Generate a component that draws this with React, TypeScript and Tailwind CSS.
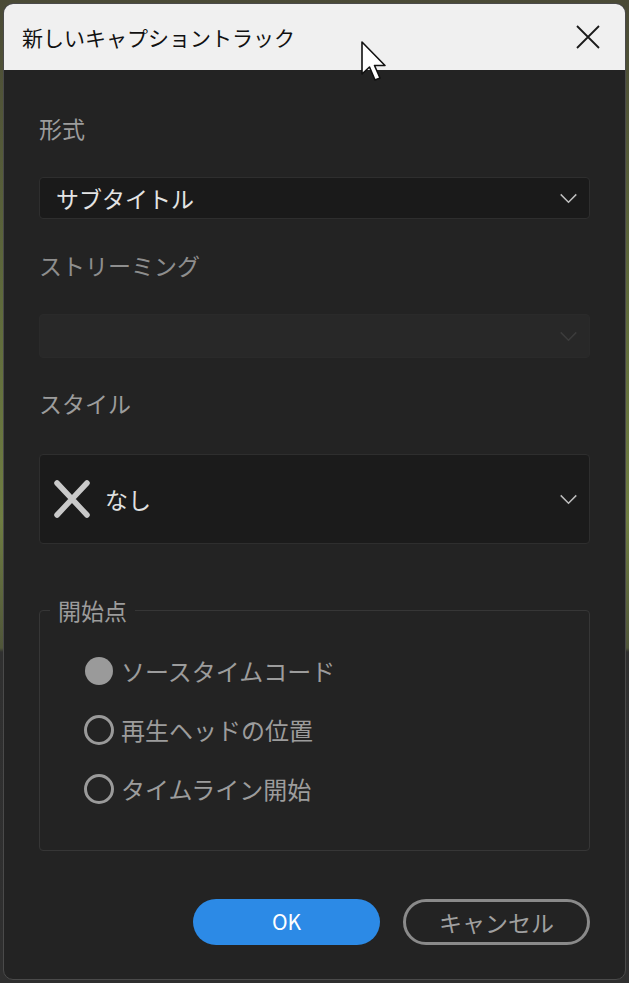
import { useState } from "react";

type StartPoint = "source" | "playhead" | "timeline";

const START_OPTIONS: { id: StartPoint; label: string }[] = [
  { id: "source", label: "ソースタイムコード" },
  { id: "playhead", label: "再生ヘッドの位置" },
  { id: "timeline", label: "タイムライン開始" },
];

function Chevron({ className }: { className?: string }) {
  return (
    <svg viewBox="0 0 20 12" className={className} fill="none" stroke="currentColor" strokeWidth="1.6">
      <path d="M1.5 1.5 L10 10 L18.5 1.5" />
    </svg>
  );
}

function Cursor() {
  return (
    <svg viewBox="0 0 28 46" className="absolute left-[360px] top-[40px] w-[28px] h-[46px] pointer-events-none">
      <path
        d="M2 2 L2 34 L9.5 27 L15 40 L20 38 L14.5 25.5 L25 25.5 Z"
        fill="#fff"
        stroke="#111"
        strokeWidth="1.6"
        strokeLinejoin="round"
      />
    </svg>
  );
}

export default function App() {
  const [start, setStart] = useState<StartPoint>("source");

  return (
    <div
      className="relative h-[983px] w-[629px] p-[3px] bg-[linear-gradient(180deg,#4a4a36_0px,#5f6a3c_300px,#6f7d42_520px,#50563a_648px,#303030_652px,#2f2f2f_983px)]"
      style={{ fontFamily: '"Noto Sans CJK JP", "Noto Sans", sans-serif' }}
    >
      <div className="flex flex-col h-full rounded-[10px] overflow-hidden bg-[#232323] border border-[#4a4a4a]">
        {/* Title bar */}
        <div className="flex items-center justify-between h-[66px] shrink-0 bg-[#f0f0f0] pl-[18px] pr-[25px]">
          <span className="text-[21px] text-[#111] leading-none">新しいキャプショントラック</span>
          <svg viewBox="0 0 24 24" className="w-[24px] h-[24px]" stroke="#1a1a1a" strokeWidth="1.8" fill="none">
            <path d="M1 1 L23 23 M23 1 L1 23" />
          </svg>
        </div>

        {/* Body */}
        <div className="flex flex-col px-[35px]">
          <div className="mt-[43px] text-[23px] leading-[30px] text-[#9c9c9c]">形式</div>
          <div className="mt-[34px] flex items-center justify-between h-[42px] rounded-[4px] bg-[#1a1a1a] border border-[#2e2e2e] pl-[16px] pr-[11px]">
            <span className="text-[23px] text-[#e4e4e4]">サブタイトル</span>
            <Chevron className="w-[19px] h-[11px] text-[#bdbdbd]" />
          </div>

          <div className="mt-[31px] text-[23px] leading-[30px] text-[#8e8e8e]">ストリーミング</div>
          <div className="mt-[34px] flex items-center justify-end h-[44px] rounded-[4px] bg-[#282828] border border-[#2a2a2a] pr-[11px]">
            <Chevron className="w-[19px] h-[11px] text-[#3c3c3c]" />
          </div>

          <div className="mt-[30px] text-[23px] leading-[30px] text-[#9c9c9c]">スタイル</div>
          <div className="mt-[36px] flex items-center justify-between h-[90px] rounded-[4px] bg-[#1b1b1b] border border-[#2e2e2e] pl-[12px] pr-[11px]">
            <div className="flex items-center gap-[13px]">
              <svg viewBox="0 0 40 40" className="w-[40px] h-[40px]" stroke="#c9c9c9" strokeWidth="5.5" strokeLinecap="round">
                <path d="M5 4 L35 36 M35 4 L5 36" />
              </svg>
              <span className="text-[23px] text-[#e0e0e0]">なし</span>
            </div>
            <Chevron className="w-[19px] h-[11px] text-[#bdbdbd]" />
          </div>

          <fieldset className="mt-[53px] rounded-[4px] border border-[#363636] pb-[45px]">
            <legend className="ml-[10px] px-[8px] text-[23px] leading-[26px] text-[#9c9c9c]">開始点</legend>
            <div className="flex flex-col gap-[27px] pt-[32px] pl-[44px]">
              {START_OPTIONS.map(({ id, label }) => (
                <button
                  key={id}
                  onClick={() => setStart(id)}
                  className="flex items-center gap-[7px] h-[32px] text-left"
                >
                  {start === id ? (
                    <span className="w-[30px] h-[30px] flex items-center justify-center">
                      <span className="w-[28px] h-[28px] rounded-full bg-[#9a9a9a]" />
                    </span>
                  ) : (
                    <span className="w-[30px] h-[30px] rounded-full border-[3px] border-[#9a9a9a]" />
                  )}
                  <span className="text-[24px] text-[#9c9c9c]">{label}</span>
                </button>
              ))}
            </div>
          </fieldset>

          <div className="mt-[48px] flex justify-end gap-[23px]">
            <button className="w-[187px] h-[46px] rounded-full bg-[#2c8ae6] text-white text-[21px]">
              OK
            </button>
            <button className="w-[187px] h-[46px] rounded-full border-[3px] border-[#8a8a8a] text-[#a0a0a0] text-[23px]">
              キャンセル
            </button>
          </div>
        </div>
      </div>
      <Cursor />
    </div>
  );
}
